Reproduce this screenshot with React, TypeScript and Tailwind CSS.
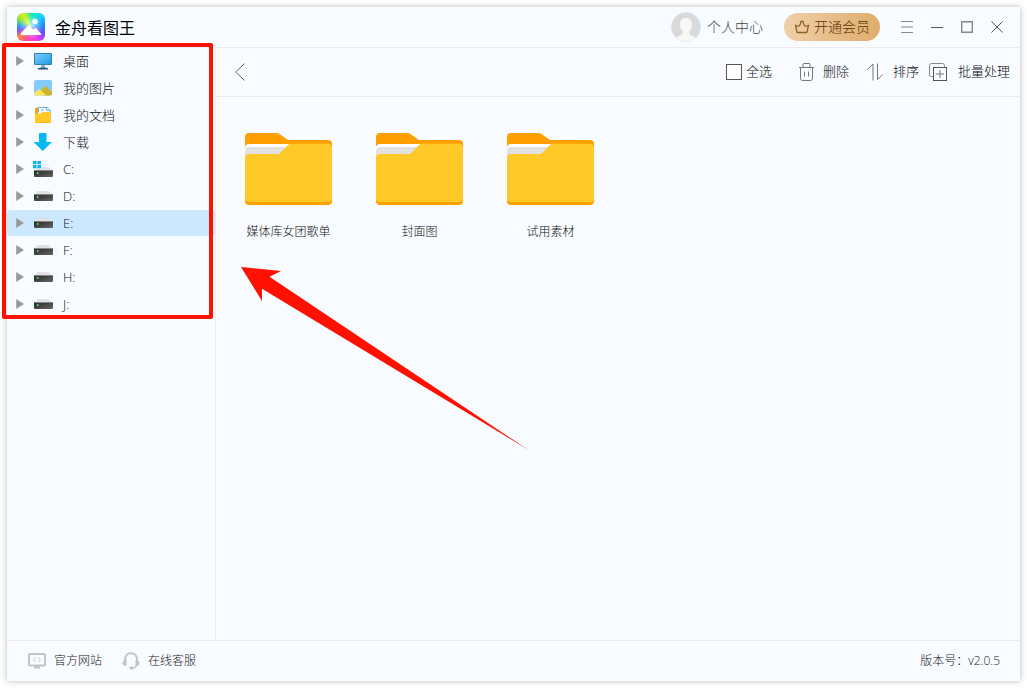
import { useState } from "react";
import clsx from "clsx";

type IconName = "desktop" | "pictures" | "documents" | "download" | "system" | "drive";

interface TreeItem {
  id: string;
  label: string;
  icon: IconName;
}

const treeItems: TreeItem[] = [
  { id: "desktop", label: "桌面", icon: "desktop" },
  { id: "pictures", label: "我的图片", icon: "pictures" },
  { id: "documents", label: "我的文档", icon: "documents" },
  { id: "downloads", label: "下载", icon: "download" },
  { id: "c", label: "C:", icon: "system" },
  { id: "d", label: "D:", icon: "drive" },
  { id: "e", label: "E:", icon: "drive" },
  { id: "f", label: "F:", icon: "drive" },
  { id: "h", label: "H:", icon: "drive" },
  { id: "j", label: "J:", icon: "drive" },
];

const folders = ["媒体库女团歌单", "封面图", "试用素材"];

function DriveShape() {
  return (
    <>
      <path d="M4.500 5h11l3.500 4H1.500z" fill="#dfe1e4" />
      <rect x="1" y="8" width="19" height="7" rx="1" fill="url(#driveBody)" />
      <path d="M1.500 8.500h18" stroke="#888" />
      <circle cx="4.600" cy="11" r="1" fill="#4be36a" />
    </>
  );
}

function TreeIcon({ name }: { name: IconName }) {
  return (
    <svg width="21" height="20" viewBox="0 0 21 20" className="shrink-0" aria-hidden="true">
      {name === "desktop" && (
        <>
          <rect x="1" y="2" width="18" height="12" rx="1" fill="#2a7fb8" />
          <rect x="2" y="3" width="16" height="10" fill="url(#screen)" />
          <path d="M8 14h4v3H8z" fill="#8fb3c9" />
          <path d="M5 18c.5-1.300 9.500-1.300 10 0z" fill="#1d587f" stroke="#1d587f" />
        </>
      )}
      {name === "pictures" && (
        <>
          <rect x="1" y="2" width="18" height="15.500" rx="2" fill="#84ccff" />
          <path d="M7 13l5.500-5L19 14v1.500a2 2 0 0 1-2 2H9z" fill="#ccb32a" />
          <path d="M1 15l5.500-4 7 6.500H3a2 2 0 0 1-2-2z" fill="#ffe55c" />
        </>
      )}
      {name === "documents" && (
        <>
          <path d="M2 4a1.500 1.500 0 0 1 1.500-1.500H6V6h12v3H2z" fill="#ff9f0a" />
          <path d="M5 2h9.500L17.500 5v4H5z" fill="#fff" />
          <path d="M5.500 7V2.500h8.800l2.700 2.700V7M13.500 2.500v3H17M7.500 5h3.500" fill="none" stroke="#6ab4dc" />
          <path d="M2 8.500h6L9.800 7H17a1 1 0 0 1 1 1v8.500a1.500 1.500 0 0 1-1.500 1.500h-13A1.500 1.500 0 0 1 2 16.500z" fill="#ffca28" />
          <path d="M2.500 17.500h15" stroke="#ffb017" />
        </>
      )}
      {name === "download" && (
        <path d="M6 1.500a.5.5 0 0 1 .5-.5h6.500a.5.5 0 0 1 .5.5V10h5.500L9.800 19 .5 10H6z" fill="#08b9f3" />
      )}
      {name === "system" && (
        <>
          <g transform="translate(0 3)">
            <DriveShape />
          </g>
          <path d="M0 2h8v7.500H0z" fill="#f8fbff" />
          <path d="M0 2h3.600v3.200H0zM4.400 2H8v3.200H4.400zM0 6h3.600v3.200H0zM4.400 6H8v3.200H4.400z" fill="#12b4ec" />
        </>
      )}
      {name === "drive" && <DriveShape />}
    </svg>
  );
}

function AppLogo() {
  return (
    <div className="relative h-7 w-7 shrink-0 overflow-hidden rounded-md bg-[radial-gradient(circle,rgba(255,255,255,0.7),transparent_60%),conic-gradient(from_0deg,#18f0a0,#18cfff_45deg,#168cf5_85deg,#6a4bff_115deg,#e93cf0_150deg,#ff4f9a_205deg,#ff8a3a_230deg,#7a55ff_255deg,#259bff_275deg,#8fe83a_305deg,#d8ef20_330deg,#18f0a0)]">
      <svg viewBox="0 0 28 28" className="absolute inset-0" aria-hidden="true">
        <path
          d="M4.800 22c-1.100 0-1.400-1-.7-1.800l6.600-7.100c.7-.7 1.500-.7 2.100 0l3.300 3.700 1.200-1.200c.7-.7 1.400-.7 2 0l4.600 4.900c.7.800.4 1.500-.6 1.500z"
          fill="#fff"
        />
        <circle cx="18" cy="8.500" r="2.700" fill="#fff" />
      </svg>
    </div>
  );
}

function FolderIcon() {
  return (
    <svg width="87" height="72" viewBox="0 0 87 72" aria-hidden="true">
      <path d="M0 4a4 4 0 0 1 4-4h27.500a5 5 0 0 1 3 1L43 7h40a4 4 0 0 1 4 4v57a4 4 0 0 1-4 4H4a4 4 0 0 1-4-4z" fill="#ffa000" />
      <path d="M0 14.500A4 4 0 0 1 4 11h43v8L34 25H0z" fill="#fff" />
      <path d="M0 17.500A4 4 0 0 1 4 14h40v5L34 26H0z" fill="#e2e2e2" />
      <path d="M0 25a4 4 0 0 1 4-4h30L43 12a4 4 0 0 1 3-1.200h37a4 4 0 0 1 4 4V65a4 4 0 0 1-4 4H4a4 4 0 0 1-4-4z" fill="#ffca28" />
    </svg>
  );
}

export default function App() {
  const [selected, setSelected] = useState("e");
  const [allChecked, setAllChecked] = useState(false);

  return (
    <div className="h-screen bg-white p-[7px] font-['Open_Sans','Noto_Sans_CJK_SC',sans-serif] font-light text-[#111]">
      {/* Shared gradients */}
      <svg width="0" height="0" className="absolute" aria-hidden="true">
        <defs>
          <linearGradient id="driveBody" x1="0" x2="1" y1="0" y2="1">
            <stop offset="0" stopColor="#252525" />
            <stop offset="1" stopColor="#666" />
          </linearGradient>
          <linearGradient id="screen" x1="0" x2="1" y1="0" y2="1">
            <stop offset="0" stopColor="#7bcdfb" />
            <stop offset="1" stopColor="#229be8" />
          </linearGradient>
        </defs>
      </svg>

      <div className="flex h-full flex-col bg-[#f8fbff] shadow-[0_0_6px_rgba(0,0,0,0.28)]">
        {/* Title bar */}
        <header className="flex h-[41px] shrink-0 items-center border-b border-[#ececee] pr-2 pl-[10px]">
          <AppLogo />
          <h1 className="ml-[10px] pt-px text-base font-normal text-black">金舟看图王</h1>
          <button className="ml-auto flex items-center gap-[6px] text-sm text-[#444]">
            <svg width="30" height="30" viewBox="0 0 30 30" aria-hidden="true">
              <defs>
                <clipPath id="avatarClip">
                  <circle cx="15" cy="15" r="14.500" />
                </clipPath>
              </defs>
              <circle cx="15" cy="15" r="14.500" fill="#d9d9d9" stroke="#d3e6f1" />
              <path
                d="M15 6c4 0 6 2.600 6 6.500 0 3-1 5.200-2.500 6.500v2.500c1 1.800 5 2.500 6.500 4.500v4H5v-4c1.500-2 5.500-2.700 6.500-4.500V19C10 17.700 9 15.500 9 12.500 9 8.600 11 6 15 6z"
                fill="#f7f7f7"
                clipPath="url(#avatarClip)"
              />
            </svg>
            个人中心
          </button>
          <button className="ml-[21px] flex h-7 items-center gap-1 rounded-full bg-linear-to-r from-[#efcfa9] to-[#dfad6a] px-[10px] text-sm text-[#5a3204]">
            <svg width="16" height="16" viewBox="0 0 16 16" fill="none" stroke="#8f5f20" strokeWidth="1.300" strokeLinejoin="round" aria-hidden="true">
              <path d="M2.800 12.500L1.500 6.200c1.400 1 2.800 1.300 4 .6L6.700 4a1.400 1.400 0 1 1 2.600 0l1.200 2.800c1.200.7 2.600.4 4-.6l-1.300 6.300a1.300 1.300 0 0 1-1.300 1H4.100a1.300 1.300 0 0 1-1.300-1z" />
            </svg>
            开通会员
          </button>
          <div className="ml-3 flex text-[#888]">
            <button aria-label="菜单" className="flex h-7 w-[30px] items-center justify-center">
              <svg width="12" height="12" viewBox="0 0 12 12" stroke="currentColor">
                <path d="M0 .5h12M0 6h12M0 11.500h12" />
              </svg>
            </button>
            <button aria-label="最小化" className="flex h-7 w-[30px] items-center justify-center">
              <svg width="12" height="12" viewBox="0 0 12 12" stroke="#555">
                <path d="M0 6.500h12" />
              </svg>
            </button>
            <button aria-label="最大化" className="flex h-7 w-[30px] items-center justify-center">
              <svg width="12" height="12" viewBox="0 0 12 12" fill="none" stroke="currentColor" strokeWidth="1.400">
                <path d="M.7.7h10.600v10.600H.7z" />
              </svg>
            </button>
            <button aria-label="关闭" className="flex h-7 w-[30px] items-center justify-center">
              <svg width="12" height="12" viewBox="0 0 12 12" stroke="#555">
                <path d="M.5.5l11 11M11.500.5l-11 11" />
              </svg>
            </button>
          </div>
        </header>

        <div className="flex min-h-0 flex-1">
          {/* Directory tree */}
          <aside className="w-[209px] shrink-0 border-r border-[#ececee]">
            <nav className="relative">
              <ul>
                {treeItems.map(item => (
                  <li key={item.id} className="pb-px">
                    <button
                      onClick={() => setSelected(item.id)}
                      className={clsx(
                        "flex h-[26px] w-full items-center gap-[9px] rounded-sm pl-[9px] text-left text-[13px]",
                        selected === item.id && "bg-[#cce8ff]"
                      )}
                    >
                      <svg width="8" height="10" viewBox="0 0 8 10" className="shrink-0" aria-hidden="true">
                        <path d="M.5.5L7.500 5 .5 9.500z" fill="#999" stroke="#999" strokeWidth=".6" />
                      </svg>
                      <TreeIcon name={item.icon} />
                      <span className="pt-px">{item.label}</span>
                    </button>
                  </li>
                ))}
              </ul>
              <div className="pointer-events-none absolute -top-[5px] right-[2px] -bottom-px -left-[5px] z-10 rounded-xs border-4 border-[#ff1000]" />
            </nav>
          </aside>

          <main className="flex min-w-0 flex-1 flex-col">
            {/* Toolbar */}
            <div className="flex h-[49px] shrink-0 items-center border-b border-[#ececee] pr-[10px] pl-[19px] text-[13px]">
              <button aria-label="返回">
                <svg width="10" height="18" viewBox="0 0 10 18" fill="none" stroke="#666">
                  <path d="M9.500.5L.7 9l8.800 8.500" />
                </svg>
              </button>
              <label className="ml-auto flex items-center gap-1">
                <input
                  type="checkbox"
                  checked={allChecked}
                  onChange={e => setAllChecked(e.target.checked)}
                  className="h-4 w-4 appearance-none border border-[#555] bg-white checked:bg-[#3d9bff]"
                />
                全选
              </label>
              <button className="ml-[26px] flex items-center gap-2">
                <svg width="17" height="18" viewBox="0 0 17 18" fill="none" stroke="#777" aria-hidden="true">
                  <path d="M1 4.500h15M5 4V1.500a1 1 0 0 1 1-1h5a1 1 0 0 1 1 1V4M2.500 4.500v11a2 2 0 0 0 2 2h8a2 2 0 0 0 2-2v-11M6.500 8.500v5M10.500 8.500v5" />
                </svg>
                删除
              </button>
              <button className="ml-[18px] flex items-center gap-[10px]">
                <svg width="16" height="18" viewBox="0 0 16 18" fill="none" stroke="#777" aria-hidden="true">
                  <path d="M.5 6.500L6 1v16.500M10.500.5v16.300l5-5.300" />
                </svg>
                排序
              </button>
              <button className="ml-[10px] flex items-center gap-[11px]">
                <svg width="18" height="18" viewBox="0 0 18 18" fill="none" aria-hidden="true">
                  <path d="M4 13.500H2.500a2 2 0 0 1-2-2v-9a2 2 0 0 1 2-2h11a2 2 0 0 1 2 2V4" stroke="#888" />
                  <rect x="4.500" y="4.500" width="13" height="13" stroke="#555" />
                  <path d="M7 11h8M11 7v8" stroke="#777" />
                </svg>
                批量处理
              </button>
            </div>

            {/* Folder grid */}
            <div className="relative flex-1 pt-9 pl-[7px]">
              <div className="flex flex-wrap">
                {folders.map(name => (
                  <button key={name} className="flex w-[131px] flex-col items-center gap-[18px] text-xs">
                    <FolderIcon />
                    <span className="leading-[18px]">{name}</span>
                  </button>
                ))}
              </div>
              <svg width="288" height="184" viewBox="0 0 288 184" className="pointer-events-none absolute top-[170px] left-[25px]" aria-hidden="true">
                <path d="M0 0l40 4-11.500 5.800L287.500 183 21 21.700V34z" fill="#ff1000" />
              </svg>
            </div>
          </main>
        </div>

        {/* Status bar */}
        <footer className="flex h-[41px] shrink-0 items-center border-t border-[#ececee] pr-5 pl-[21px] text-xs text-[#222]">
          <a href="#website" className="flex items-center gap-2">
            <svg width="18" height="16" viewBox="0 0 18 16" fill="none" stroke="#c4c4c4" aria-hidden="true">
              <rect x="1" y="1" width="16" height="11.500" rx="1" strokeWidth="2" />
              <path d="M6 13h6v2.500H6z" fill="#c4c4c4" stroke="none" />
              <path d="M7.500 4.500L5.500 6.700l2 2.200M10.500 4.500l2 2.200-2 2.200" />
            </svg>
            官方网站
          </a>
          <a href="#support" className="ml-5 flex items-center gap-2">
            <svg width="18" height="18" viewBox="0 0 18 18" fill="none" stroke="#c4c4c4" aria-hidden="true">
              <path d="M3 8.500V7.500C3 3.500 5.500 1.200 9 1.200s6 2.300 6 6.300v1" strokeWidth="2" />
              <path d="M4.500 8v6C2 14 .5 13 .5 11S2 8 4.500 8zM13.500 8v6c2.500 0 4-1 4-3s-1.500-3-4-3z" fill="#c4c4c4" stroke="none" />
              <path d="M15 13c-.8 1.800-2.500 3-4.500 3" strokeWidth="1.500" />
              <ellipse cx="9.500" cy="16" rx="2.200" ry="1.700" fill="#c4c4c4" stroke="none" />
            </svg>
            在线客服
          </a>
          <span className="ml-auto">版本号：v2.0.5</span>
        </footer>
      </div>
    </div>
  );
}
